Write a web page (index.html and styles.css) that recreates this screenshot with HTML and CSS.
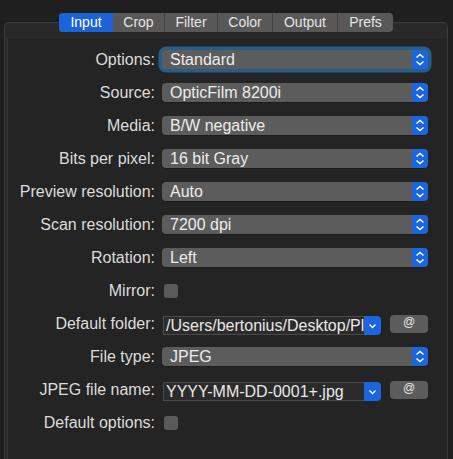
FILE: index.html
```
<!DOCTYPE html>
<html>
<head>
<meta charset="utf-8">
<link rel="stylesheet" href="styles.css">
</head>
<body>
<div class="panel">
  <div class="tabs">
    <div class="tab active" style="width:54px">Input</div>
    <div class="tab" style="width:52px">Crop</div>
    <div class="tab" style="width:53px">Filter</div>
    <div class="tab" style="width:55px">Color</div>
    <div class="tab" style="width:65px">Output</div>
    <div class="tab last">Prefs</div>
  </div>
  <div class="inner">
    <div class="form">
      <div class="label">Options:</div>
      <div class="popup focus"><span class="val">Standard</span><span class="step"><svg width="16" height="19" viewBox="0 0 16 19"><path d="M4.5 7.5 L8 4.5 L11.5 7.5 M4.5 11.5 L8 14.5 L11.5 11.5" fill="none" stroke="#fff" stroke-width="1.5"/></svg></span></div>

      <div class="label">Source:</div>
      <div class="popup"><span class="val">OpticFilm 8200i</span><span class="step"><svg width="16" height="19" viewBox="0 0 16 19"><path d="M4.5 7.5 L8 4.5 L11.5 7.5 M4.5 11.5 L8 14.5 L11.5 11.5" fill="none" stroke="#fff" stroke-width="1.5"/></svg></span></div>

      <div class="label">Media:</div>
      <div class="popup"><span class="val">B/W negative</span><span class="step"><svg width="16" height="19" viewBox="0 0 16 19"><path d="M4.5 7.5 L8 4.5 L11.5 7.5 M4.5 11.5 L8 14.5 L11.5 11.5" fill="none" stroke="#fff" stroke-width="1.5"/></svg></span></div>

      <div class="label">Bits per pixel:</div>
      <div class="popup"><span class="val">16 bit Gray</span><span class="step"><svg width="16" height="19" viewBox="0 0 16 19"><path d="M4.5 7.5 L8 4.5 L11.5 7.5 M4.5 11.5 L8 14.5 L11.5 11.5" fill="none" stroke="#fff" stroke-width="1.5"/></svg></span></div>

      <div class="label">Preview resolution:</div>
      <div class="popup"><span class="val">Auto</span><span class="step"><svg width="16" height="19" viewBox="0 0 16 19"><path d="M4.5 7.5 L8 4.5 L11.5 7.5 M4.5 11.5 L8 14.5 L11.5 11.5" fill="none" stroke="#fff" stroke-width="1.5"/></svg></span></div>

      <div class="label">Scan resolution:</div>
      <div class="popup"><span class="val">7200 dpi</span><span class="step"><svg width="16" height="19" viewBox="0 0 16 19"><path d="M4.5 7.5 L8 4.5 L11.5 7.5 M4.5 11.5 L8 14.5 L11.5 11.5" fill="none" stroke="#fff" stroke-width="1.5"/></svg></span></div>

      <div class="label">Rotation:</div>
      <div class="popup"><span class="val">Left</span><span class="step"><svg width="16" height="19" viewBox="0 0 16 19"><path d="M4.5 7.5 L8 4.5 L11.5 7.5 M4.5 11.5 L8 14.5 L11.5 11.5" fill="none" stroke="#fff" stroke-width="1.5"/></svg></span></div>

      <div class="label">Mirror:</div>
      <div class="ctrl"><span class="check"></span></div>

      <div class="label">Default folder:</div>
      <div class="ctrl combo-row">
        <div class="combo"><span class="field">/Users/bertonius/Desktop/Pl</span><span class="cbtn"><svg width="17" height="19" viewBox="0 0 17 19"><path d="M5.5 8.5 L8.5 11.5 L11.5 8.5" fill="none" stroke="#fff" stroke-width="1.4"/></svg></span></div>
        <div class="at">@</div>
      </div>

      <div class="label">File type:</div>
      <div class="popup"><span class="val">JPEG</span><span class="step"><svg width="16" height="19" viewBox="0 0 16 19"><path d="M4.5 7.5 L8 4.5 L11.5 7.5 M4.5 11.5 L8 14.5 L11.5 11.5" fill="none" stroke="#fff" stroke-width="1.5"/></svg></span></div>

      <div class="label">JPEG file name:</div>
      <div class="ctrl combo-row">
        <div class="combo"><span class="field">YYYY-MM-DD-0001+.jpg</span><span class="cbtn"><svg width="17" height="19" viewBox="0 0 17 19"><path d="M5.5 8.5 L8.5 11.5 L11.5 8.5" fill="none" stroke="#fff" stroke-width="1.4"/></svg></span></div>
        <div class="at">@</div>
      </div>

      <div class="label">Default options:</div>
      <div class="ctrl"><span class="check"></span></div>
    </div>
  </div>
</div>
</body>
</html>
```

FILE: styles.css
```
html, body {
  margin: 0;
  padding: 0;
  background: #1f1f1f;
  height: 100%;
  overflow: hidden;
}
body {
  font-family: "Liberation Sans", Arial, sans-serif;
  color: #dedede;
}
.panel {
  position: relative;
  margin: 22px 5px 0 4px;
  height: calc(100vh - 22px);
  border: 1px solid #3b3b3b;
  border-bottom: none;
  border-radius: 5px 5px 0 0;
  background: #292929;
  padding: 16px 0 0 2px;
  box-sizing: border-box;
}
.tabs {
  position: absolute;
  top: -10px;
  left: 54px;
  display: flex;
  height: 19px;
  width: 334px;
  border-radius: 4px;
  overflow: hidden;
  background: #585858;
}
.tab {
  height: 19px;
  line-height: 19px;
  font-size: 14px;
  color: #e4e4e4;
  text-align: center;
  border-right: 1px solid #444;
  box-sizing: border-box;
}
.tab.last {
  flex: 1;
  border-right: none;
}
.tab.active {
  background: #1c63d8;
  color: #fff;
  border-right: none;
}
.inner {
  background: #242424;
  height: 100%;
  border-left: 1px solid #3a3a3a;
}
.form {
  display: grid;
  grid-template-columns: 147px 266px;
  grid-auto-rows: 33px;
  column-gap: 7px;
  padding-top: 4px;
  align-items: center;
}
.label {
  text-align: right;
  font-size: 16px;
  color: #dcdcdc;
  white-space: nowrap;
}
.popup {
  display: flex;
  height: 19px;
  border-radius: 4px;
  background: #5c5c5c;
  overflow: hidden;
  box-shadow: 0 0.5px 0.5px rgba(0,0,0,0.4);
}
.popup.focus {
  box-shadow: 0 0 0 3.5px #245f8c;
  overflow: visible;
}
.popup .val {
  flex: 1;
  padding-left: 8px;
  font-size: 16px;
  line-height: 19px;
  color: #ececec;
}
.popup .step {
  width: 16px;
  height: 19px;
  background: #1b65df;
  border-radius: 0 4px 4px 0;
  display: flex;
}
.ctrl {
  display: flex;
  align-items: center;
}
.check {
  width: 14px;
  height: 14px;
  border-radius: 3px;
  background: #5a5a5a;
  margin-left: 2px;
}
.combo-row {
  gap: 9px;
}
.combo {
  display: flex;
  height: 19px;
  margin-top: 4px;
  margin-left: 1px;
}
.field {
  width: 201px;
  height: 19px;
  box-sizing: border-box;
  border: 1px solid #4a4a4a;
  border-right: none;
  background: #2b2b2b;
  font-size: 16px;
  line-height: 17px;
  padding-left: 2px;
  color: #e8e8e8;
  overflow: hidden;
  white-space: nowrap;
}
.cbtn {
  width: 17px;
  height: 19px;
  background: #1b65df;
  border-radius: 0 4px 4px 0;
  display: flex;
}
.at {
  width: 38px;
  height: 18px;
  border-radius: 4px;
  background: #5c5c5c;
  font-size: 12px;
  text-align: center;
  line-height: 14px;
  color: #e8e8e8;
}
```
